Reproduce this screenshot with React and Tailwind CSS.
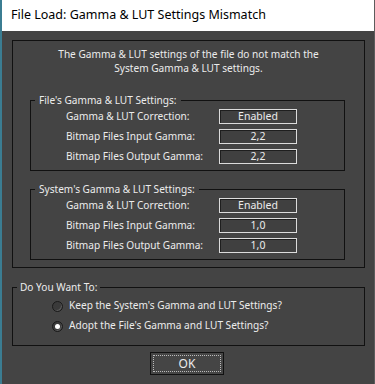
import React, { useState } from 'react';

const font = { fontFamily: '"Noto Sans", "Open Sans", Arial, sans-serif' };

const ValueBox = ({ children }) => (
  <div className="w-[78px] h-[15px] shrink-0 border border-[#dcdcdc] bg-[#404040] shadow-[inset_1px_1px_0_#1e1e1e] flex items-center justify-center text-[10.5px] leading-none text-[#ececec]">
    {children}
  </div>
);

const SettingsGroup = ({ title, rows, className }) => (
  <fieldset className={`ml-[17px] mr-[19px] border border-[#111] pb-[6px] ${className}`}>
    <legend className="ml-[4px] px-[4px] text-[10.1px] leading-[14px] text-[#ececec]">{title}</legend>
    <div className="flex flex-col gap-[5px] mt-[2px]">
      {rows.map(([label, value]) => (
        <div key={label} className="flex items-center h-[15px]">
          <span className="w-[188px] shrink-0 pl-[35px] text-[10.1px] text-[#ececec] whitespace-nowrap">{label}</span>
          <ValueBox>{value}</ValueBox>
        </div>
      ))}
    </div>
  </fieldset>
);

const Radio = ({ checked, label, onClick }) => (
  <button type="button" onClick={onClick} className="flex items-center h-[16px] text-left">
    <span className="w-[11px] h-[11px] rounded-full border border-[#1a1a1a] bg-[#3a3a3a] shadow-[inset_-1px_-1px_0_#5a5a5a] flex items-center justify-center mr-[6px]">
      {checked && <span className="w-[5px] h-[5px] rounded-full bg-white" />}
    </span>
    <span className="text-[10.1px] text-[#ececec] whitespace-nowrap">{label}</span>
  </button>
);

export default function App() {
  const [choice, setChoice] = useState('adopt');

  return (
    <div style={font} className="w-[375px] h-[384px] bg-[#444444] border-l-2 border-l-[#3b7d92] border-r border-r-[#5c5c5c] flex flex-col overflow-hidden">
      <div className="h-[31px] bg-white flex items-center pl-[9px] shrink-0">
        <span className="text-[12.5px] text-black">File Load: Gamma &amp; LUT Settings Mismatch</span>
      </div>

      <div className="mt-[9px] ml-[10px] mr-[9px] border border-[#111] pb-[7px]">
        <div className="pt-[6px] text-center text-[10.1px] leading-[14px] text-[#ececec]">
          <p>The Gamma &amp; LUT settings of the file do not match the</p>
          <p>System Gamma &amp; LUT settings.</p>
        </div>

        <SettingsGroup
          className="mt-[18px]"
          title="File's Gamma & LUT Settings:"
          rows={[
            ['Gamma & LUT Correction:', 'Enabled'],
            ['Bitmap Files Input Gamma:', '2,2'],
            ['Bitmap Files Output Gamma:', '2,2'],
          ]}
        />

        <SettingsGroup
          className="mt-[11px]"
          title="System's Gamma & LUT Settings:"
          rows={[
            ['Gamma & LUT Correction:', 'Enabled'],
            ['Bitmap Files Input Gamma:', '1,0'],
            ['Bitmap Files Output Gamma:', '1,0'],
          ]}
        />
      </div>

      <fieldset className="mt-[12px] ml-[10px] mr-[9px] border border-[#111] pb-[11px]">
        <legend className="ml-[4px] px-[3px] text-[10.1px] leading-[14px] text-[#ececec]">Do You Want To:</legend>
        <div className="flex flex-col gap-[4px] pl-[39px] mt-[4px]">
          <Radio
            checked={choice === 'keep'}
            onClick={() => setChoice('keep')}
            label="Keep the System's Gamma and LUT Settings?"
          />
          <Radio
            checked={choice === 'adopt'}
            onClick={() => setChoice('adopt')}
            label="Adopt the File's Gamma and LUT Settings?"
          />
        </div>
      </fieldset>

      <div className="flex justify-center mt-[6px] pr-[2px]">
        <button
          type="button"
          className="w-[74px] h-[23px] border border-[#111] bg-[#454545] p-[2px] text-[12px] text-[#ececec]"
        >
          <span className="w-full h-full flex items-center justify-center border border-dotted border-[#bbbbbb]">OK</span>
        </button>
      </div>
    </div>
  );
}
